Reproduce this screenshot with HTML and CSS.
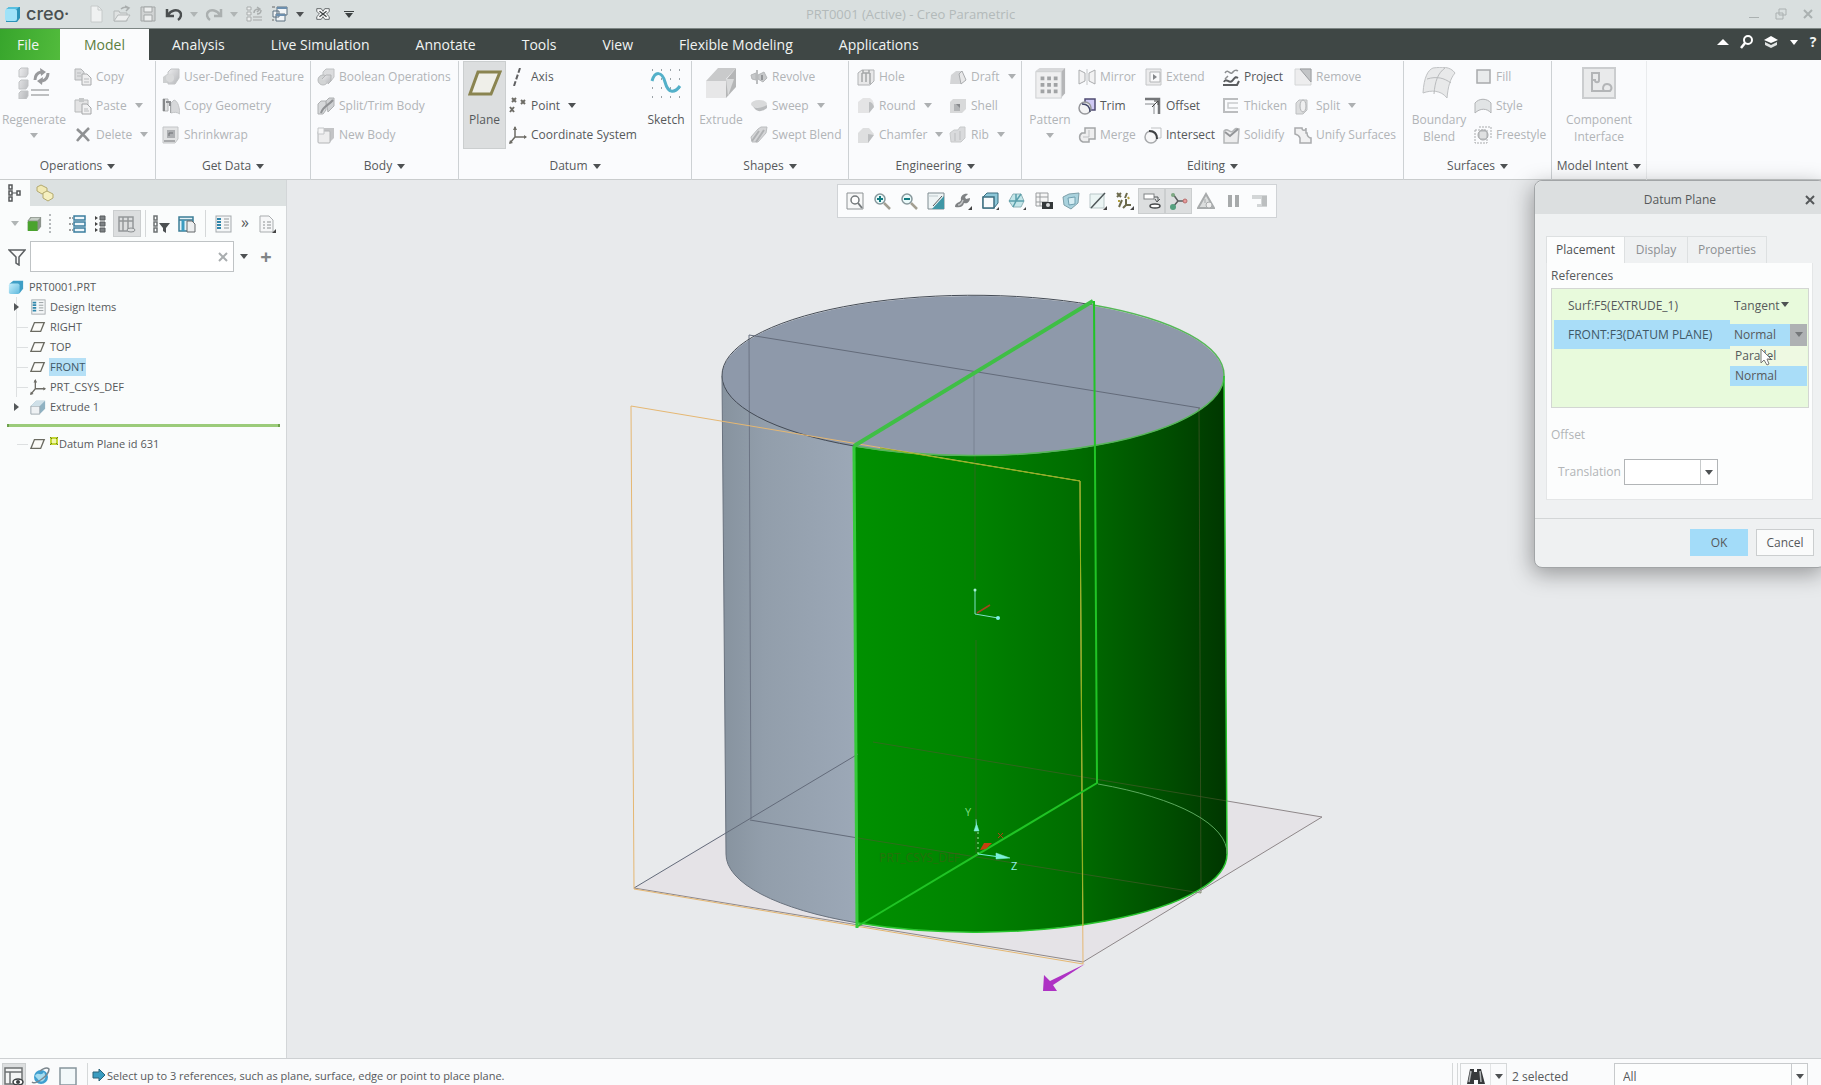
FILE: index.html
```html
<!DOCTYPE html>
<html lang="en">
<head>
<meta charset="utf-8">
<title>PRT0001 (Active) - Creo Parametric</title>
<link rel="stylesheet" href="styles.css">
</head>
<body>
<svg class="sprite" aria-hidden="true">
  <defs>
    <linearGradient id="gCube" x1="0" y1="0" x2="1" y2="1"><stop offset="0" stop-color="#c6effc"/><stop offset="1" stop-color="#5fb9dd"/></linearGradient>
    <linearGradient id="gSolid" x1="0" y1="0" x2="1" y2="1"><stop offset="0" stop-color="#ececee"/><stop offset="1" stop-color="#b4b6b9"/></linearGradient>
  </defs>
  <symbol id="logo" viewBox="0 0 18 18"><path d="M2 5l3-3h11v11l-3 4H2z" fill="#2b93b8"/><rect x="1" y="4" width="12" height="12" rx="2" fill="#9fe2f8"/><path d="M2 4l3-2h10l-2 2z" fill="#58bfe0"/></symbol>
  <symbol id="new" viewBox="0 0 18 18"><path d="M4 1h7l4 4v12H4z" fill="#eff1f1" stroke="#c6caca"/><path d="M11 1v4h4" fill="none" stroke="#c6caca"/></symbol>
  <symbol id="open" viewBox="0 0 18 18"><path d="M1 16V6h5l1 2h7v8z" fill="#dfe2e2" stroke="#b5b9b9"/><path d="M1 16l4-6h12l-4 6z" fill="#eceeee" stroke="#b5b9b9"/><path d="M8 4c2-2 5-2 7-1M12 1l4 2-3 3" fill="none" stroke="#a9adad" stroke-width="1.5"/></symbol>
  <symbol id="save" viewBox="0 0 18 18"><path d="M2 2h14v14H2z" fill="#d0d3d3" stroke="#a3a7a7"/><path d="M5 2h8v5H5zM5 10h8v6H5z" fill="#edefef" stroke="#a3a7a7"/></symbol>
  <symbol id="undo" viewBox="0 0 18 18"><path d="M2 4v7h7" fill="none" stroke="#4b4f50" stroke-width="2.5"/><path d="M3 10c3-5 9-6 12-3 2 2 1 6-2 8" fill="none" stroke="#4b4f50" stroke-width="2.5"/></symbol>
  <symbol id="redo" viewBox="0 0 18 18"><path d="M16 4v7H9" fill="none" stroke="#abb0b0" stroke-width="2.5"/><path d="M15 10C12 5 6 4 3 7c-2 2-1 6 2 8" fill="none" stroke="#abb0b0" stroke-width="2.5"/></symbol>
  <symbol id="regen-s" viewBox="0 0 18 18"><path d="M2 2h4v3H2zM2 7h4v3H2zM2 12h4v4H2z" fill="#eceeee" stroke="#a9adad"/><path d="M8 12h9M8 15h9" stroke="#b7bbbb" stroke-width="1.5"/><path d="M9 8c0-3 2-4 5-4M12 2l3 2-3 3M16 5c0 3-1 4-4 4" fill="none" stroke="#a9adad" stroke-width="1.5"/></symbol>
  <symbol id="windows" viewBox="0 0 18 18"><path d="M6 2h10v8H6zM2 6h6v6H2zM5 9h9v7H5z" fill="#f2f5f7" stroke="#5d7080"/><path d="M6 3h10M5 10h9" stroke="#6c8fae" stroke-width="2"/><path d="M1 2h3M1 15h2" stroke="#666"/></symbol>
  <symbol id="closewin" viewBox="0 0 18 18"><path d="M2 3h5l2 3 2-3h5v3l-3 3 3 3v3h-5l-2-3-2 3H2v-3l3-3-3-3z" fill="#fafbfb" stroke="#565b5c"/><path d="M5 6l8 6M13 6l-8 6" stroke="#3f4445" stroke-width="1.5"/></symbol>
  <symbol id="search" viewBox="0 0 14 14"><circle cx="8" cy="5" r="4" fill="none" stroke="#fff" stroke-width="2"/><path d="M5 8l-4 5" stroke="#fff" stroke-width="2.5"/></symbol>
  <symbol id="learn" viewBox="0 0 14 14"><path d="M7 1l7 4-7 3-7-3z" fill="#fff"/><path d="M1 7l6 3 6-3v3l-6 3-6-3z" fill="#dfe3e2"/></symbol>
  <symbol id="regen" viewBox="0 0 32 32"><path d="M1 3l2-2h7v6l-2 3H1zM1 15l2-2h7v6l-2 3H1zM1 26l2-2h7v5l-2 3H1z" fill="url(#gSolid)" stroke="#c1c3c5"/><path d="M13 23h18M13 28h18" stroke="#bdbfc1" stroke-width="2"/><path d="M17 13c0-5 2-7 6-8M30 6c0 5-2 7-6 8" fill="none" stroke="#98999c" stroke-width="3"/><path d="M22 1l6 4-5 4zM25 10l-6 4 5 4z" fill="#98999c"/></symbol>
  <symbol id="copy" viewBox="0 0 18 18"><path d="M1 1h6l3 3v8H1z" fill="#dcdddf" stroke="#b3b5b7"/><path d="M8 6h5l4 4v7H8z" fill="#eeeeef" stroke="#a8aaac"/><path d="M10 11h5M10 14h5M3 5h4M3 8h4" stroke="#b9bbbd"/></symbol>
  <symbol id="paste" viewBox="0 0 18 18"><path d="M1 3h13v12H1z" fill="#e3e3e4" stroke="#b7b9ba"/><path d="M5 1h5v4H5z" fill="#c6c8c9"/><path d="M8 7h5l4 4v6H8z" fill="#f1f1f2" stroke="#a4a6a8"/><path d="M10 12h4M10 14h5" stroke="#b9bbbd"/></symbol>
  <symbol id="delete" viewBox="0 0 18 18"><path d="M3 3c4 4 8 7 12 12M15 2C11 6 7 10 3 15" fill="none" stroke="#8f9193" stroke-width="2.5"/></symbol>
  <symbol id="udf" viewBox="0 0 18 18"><path d="M1 9l4-3h4l-1 9H1z" fill="#cdcfd0"/><path d="M6 4l3-3h8v9l-4 6H6z" fill="url(#gSolid)" stroke="#c2c4c6"/><circle cx="8" cy="10" r="4" fill="#d9dadb"/></symbol>
  <symbol id="copygeo" viewBox="0 0 18 18"><path d="M1 2h5v12H1z" fill="#e2e3e4" stroke="#b0b2b4"/><path d="M2 2v12M9 5v11" stroke="#86888a" stroke-width="2"/><path d="M9 6l3-3c3 1 5 4 6 14-3-2-6-2-9-1z" fill="#d7d8da" stroke="#c2c4c6"/><path d="M4 5h4v4" fill="none" stroke="#8b8d90" stroke-width="2"/></symbol>
  <symbol id="shrink" viewBox="0 0 18 18"><path d="M1 1h15v12l-3 4H1z" fill="#e2e3e4" stroke="#c3c5c7"/><rect x="5" y="4" width="8" height="8" fill="#adafb2"/><path d="M7 10V7h4M2 15h11" stroke="#6f7174" fill="none"/></symbol>
  <symbol id="bool" viewBox="0 0 18 18"><path d="M6 4l3-3h8v8l-3 4H6z" fill="#dbdcde" stroke="#c0c2c4"/><circle cx="6" cy="12" r="5" fill="#d2d4d5" stroke="#b9bbbd"/><path d="M5 11l4-4h5v6l-3 3" fill="url(#gSolid)" stroke="#b3b5b7"/></symbol>
  <symbol id="splitbody" viewBox="0 0 18 18"><path d="M1 7l3-3h5v9l-3 4H1z" fill="#d6d8da" stroke="#aeb0b2"/><path d="M9 4l3-3h5v8l-6 6z" fill="#cfd1d3" stroke="#aeb0b2"/><path d="M4 16C6 9 11 9 16 3" fill="none" stroke="#8f9194" stroke-width="2"/></symbol>
  <symbol id="newbody" viewBox="0 0 18 18"><path d="M2 5l3-3h12v10l-4 4H2z" fill="#c3c4c6"/><rect x="1" y="5" width="12" height="12" rx="1" fill="#ededee" stroke="#b2b4b6"/><path d="M1 2h6v6H1z" fill="#f6f6f7" stroke="#c4c6c8"/></symbol>
  <symbol id="plane-l" viewBox="0 0 34 32"><path d="M10 5h22l-9 22H2z" fill="#efefe9" stroke="#8a8450" stroke-width="3"/></symbol>
  <symbol id="axis" viewBox="0 0 18 18"><path d="M11 0L5 18" stroke="#5f6062" stroke-width="2" stroke-dasharray="5 2"/></symbol>
  <symbol id="point" viewBox="0 0 18 18"><path d="M3 1l4 4M7 1L3 5M12 3l4 4M16 3l-4 4M1 10l4 5M5 10l-4 5" stroke="#6d6c66" stroke-width="2"/></symbol>
  <symbol id="csys" viewBox="0 0 18 18"><path d="M6 1v10h11M6 11l-5 6" fill="none" stroke="#6d6c66" stroke-width="1.5"/><path d="M6 0l2 4H4zM18 11l-3-2v4zM0 18l1-4 3 3z" fill="#6d6c66"/></symbol>
  <symbol id="sketch" viewBox="0 0 32 32"><path d="M2 3h29M2 12h29M2 21h29M2 30h29" stroke="#9ba3a8" stroke-width="2" stroke-dasharray="1 8"/><path d="M2 14C5 4 12 4 15 15s9 12 15 4" fill="none" stroke="#53b0c9" stroke-width="3"/></symbol>
  <symbol id="extrude" viewBox="0 0 32 32"><path d="M1 14L13 1h18L21 12V31H1z" fill="#c9cacb"/><path d="M1 14h20v17H1z" fill="#e7e7e8"/><path d="M21 13L31 1v19L21 31z" fill="#b5b6b7"/><path d="M21 12h8l-6 17" fill="#d9dadb"/></symbol>
  <symbol id="revolve" viewBox="0 0 18 18"><path d="M7 2v14" stroke="#a6a8aa" stroke-width="1.5"/><path d="M1 7l5-2v7l-4-1zM8 7l6-3 3 6-4 4-5-3z" fill="#c6c8ca" stroke="#b5b7b9"/><path d="M12 7v5" stroke="#939598" stroke-width="2"/></symbol>
  <symbol id="sweep" viewBox="0 0 18 18"><ellipse cx="9" cy="7" rx="8" ry="4" fill="#d9dadb"/><path d="M1 7c3 5 9 5 16 1v3c-5 4-9 4-12 1z" fill="#b9bbbd"/></symbol>
  <symbol id="swept" viewBox="0 0 18 18"><path d="M1 11L8 3l3-2h6l-1 6-8 9H2z" fill="#d4d5d7" stroke="#bbbdbf"/><path d="M2 15L9 5M6 16l8-12" stroke="#b0b2b4" stroke-width="2"/></symbol>
  <symbol id="hole" viewBox="0 0 18 18"><path d="M1 5l4-3h12v11l-4 4H1z" fill="#e8e8e9" stroke="#b1b3b5"/><path d="M5 5v9M9 5v9M6 2v3h6V2M13 5v11" stroke="#a4a6a8" fill="none" stroke-width="1.5"/></symbol>
  <symbol id="round" viewBox="0 0 18 18"><path d="M1 5l5-4h7c4 3 4 6 4 9l-5 6H1z" fill="#e4e4e5"/><path d="M12 5c3 0 4 2 5 5l-5 6z" fill="#bcbec0"/></symbol>
  <symbol id="chamfer" viewBox="0 0 18 18"><path d="M1 7l5-5h6l5 6-6 9H1z" fill="#dedfe0"/><path d="M11 8l6 1-6 8z" fill="#bcbec0"/></symbol>
  <symbol id="draft" viewBox="0 0 18 18"><path d="M2 7l5-4h6l3 9-4 4H1z" fill="#d4d5d7"/><path d="M10 6l3-3 4 9-5 4z" fill="#e8e8e9" stroke="#aaacaf"/></symbol>
  <symbol id="shell" viewBox="0 0 18 18"><path d="M1 5l3-3h13v10l-4 4H1z" fill="#d8d9da"/><path d="M5 7h6v7H5z" fill="#b2b4b6"/><path d="M7 7h4v4z" fill="#86888b"/></symbol>
  <symbol id="rib" viewBox="0 0 18 18"><path d="M1 7l4-3h4l2-3h5v11l-4 4H2z" fill="#d9dadc" stroke="#c8cacb"/><path d="M6 7v8M11 5v9" stroke="#bbbdbf"/></symbol>
  <symbol id="pattern" viewBox="0 0 34 34"><path d="M2 4l4-3h27v27l-4 5H2z" fill="#d7d8da"/><path d="M29 5l4-4v27l-4 4z" fill="#b5b6b8"/><rect x="2" y="5" width="27" height="28" fill="#efeff0" stroke="#cdcfd0"/><path d="M7 12h19M7 19h19M7 26h19" stroke="#a1a3a5" stroke-width="4" stroke-dasharray="4 3"/></symbol>
  <symbol id="mirror" viewBox="0 0 18 18"><path d="M1 2l6 3v8l-6 3zM17 2l-6 3v8l6 3z" fill="#f2f2f3" stroke="#aaacae"/><path d="M9 1v16" stroke="#c6c8ca"/></symbol>
  <symbol id="trim" viewBox="0 0 18 18"><path d="M7 2h10v11H12L7 7z" fill="#cfc9f4" stroke="#4f4b72" stroke-width="1.5"/><circle cx="7" cy="11" r="6" fill="#f3f3f4" stroke="#96979b" stroke-width="1.5"/><path d="M4 7c5 0 8 3 8 8" fill="none" stroke="#44486a" stroke-width="1.5"/></symbol>
  <symbol id="merge" viewBox="0 0 18 18"><path d="M7 2h10v11h-6v3H5a5 5 0 0 1-1-9h3z" fill="#eeeeef" stroke="#a4a6a8" stroke-width="1.5"/><path d="M5 11h6V4" fill="none" stroke="#bfc1c3"/></symbol>
  <symbol id="extend" viewBox="0 0 18 18"><path d="M2 1h15v16H2z" fill="#ebebec" stroke="#c4c6c8"/><path d="M6 4h10v10H6z" fill="#f9f9fa" stroke="#b3b5b7"/><path d="M9 6l4 3-4 3z" fill="#85878a"/></symbol>
  <symbol id="offset" viewBox="0 0 18 18"><path d="M1 2h14v15" fill="none" stroke="#747679" stroke-width="2.5"/><path d="M1 7h9v10" fill="none" stroke="#adb0b2" stroke-width="1.5"/><path d="M8 10l6-6M10 4h4v4" fill="none" stroke="#444"/></symbol>
  <symbol id="intersect" viewBox="0 0 18 18"><path d="M7 2h10v10h-5" fill="none" stroke="#bfc1c3"/><circle cx="7" cy="11" r="6" fill="#f7f7f8" stroke="#a7a9ac" stroke-width="1.5"/><path d="M5 5c5 0 8 3 8 8" fill="none" stroke="#3f4143" stroke-width="2"/></symbol>
  <symbol id="project" viewBox="0 0 18 18"><path d="M3 5c3-5 5 2 7 0s3-4 6-2M6 8l-3 3" fill="none" stroke="#8d8f92" stroke-width="1.5"/><path d="M2 14c2-5 5 2 8-1s3-5 6-3M1 17h14l2-4" fill="none" stroke="#5b5d60" stroke-width="2"/></symbol>
  <symbol id="thicken" viewBox="0 0 18 18"><path d="M16 2H2v13h14" fill="none" stroke="#bbbdbf" stroke-width="2"/><path d="M16 6H6v5h10" fill="none" stroke="#c9cbcd" stroke-width="1.5"/></symbol>
  <symbol id="solidify" viewBox="0 0 18 18"><path d="M2 5c4-4 6 3 9 0s3-3 6-2l-1 14H2z" fill="#ececed" stroke="#b4b6b8" stroke-width="1.5"/><path d="M3 6l5 4 8-7" fill="none" stroke="#939598" stroke-width="2"/></symbol>
  <symbol id="remove" viewBox="0 0 18 18"><path d="M1 1h16v16H1z" fill="#ededee" stroke="#d4d6d7"/><path d="M6 1h11v13z" fill="#c3c5c7" stroke="#9c9ea1"/></symbol>
  <symbol id="split" viewBox="0 0 18 18"><path d="M2 6l3-3h8v10l-4 4H2z" fill="#dcddde" stroke="#bdbfc1"/><ellipse cx="9" cy="9" rx="3" ry="6" fill="#efeff0" stroke="#b1b3b5"/></symbol>
  <symbol id="unify" viewBox="0 0 18 18"><path d="M1 2h7c0 3 4 3 4 0v5h1c0 4 3 5 4 5v5H6v-5C5 9 1 8 1 8z" fill="#f1f1f2" stroke="#a9abad" stroke-width="1.5"/></symbol>
  <symbol id="boundary" viewBox="0 0 34 32"><path d="M1 26C2 10 6 3 11 1c9-1 17-2 22 5-5 6-7 14-8 25-6-8-16-8-24-5z" fill="#e8e9ea" stroke="#c0c2c4"/><path d="M12 27C13 14 16 6 23 1M5 12c10-3 17-1 24 4" fill="none" stroke="#b9bbbd"/></symbol>
  <symbol id="fill" viewBox="0 0 18 18"><rect x="3" y="2" width="13" height="13" fill="#e9ebec" stroke="#a8aaac" stroke-width="1.5"/></symbol>
  <symbol id="style" viewBox="0 0 18 18"><path d="M1 15V6c4-5 12-5 16 0v10c-4-5-11-5-16 0z" fill="#e1e4e5" stroke="#b1b3b5"/></symbol>
  <symbol id="freestyle" viewBox="0 0 18 18"><path d="M1 4h12v13H1zM5 1h12v12" fill="none" stroke="#a9abad" stroke-dasharray="2 1"/><circle cx="9" cy="9" r="5" fill="#c6c8ca" stroke="#a3a5a7"/><path d="M6 6h6v6H6z" fill="#dfe0e1"/></symbol>
  <symbol id="component" viewBox="0 0 34 32"><rect x="1" y="1" width="32" height="30" fill="#e9eaeb" stroke="#cbcdcf" stroke-width="2"/><path d="M10 12V6h7v7c0 3-4 3-4 0h-3v11h12c-2-2-1-7 3-7s6 4 3 7h-6" fill="none" stroke="#b3b5b7" stroke-width="2"/></symbol>
  <symbol id="tree" viewBox="0 0 16 18"><path d="M2 1h3v4H2zM2 7h3v4H2zM2 13h3v4H2zM10 7h3v4h-3z" fill="none" stroke="#55585a" stroke-width="1.5"/><path d="M5 9h5" stroke="#55585a"/></symbol>
  <symbol id="folders" viewBox="0 0 18 18"><path d="M1 3l4-2 6 3v4l-5 2-5-3z" fill="#f1e9b4" stroke="#b3a96f"/><path d="M7 9l4-2 6 3v4l-5 3-5-3z" fill="#f6f0c0" stroke="#b3a96f"/></symbol>
  <symbol id="greencube" viewBox="0 0 18 18"><path d="M2 5l3-4h12v11l-4 5H2z" fill="#8c948c"/><rect x="2" y="6" width="11" height="11" rx="1" fill="#4aa32e"/><path d="M3 5l3-3h10l-3 3z" fill="#c6cec6"/></symbol>
  <symbol id="list1" viewBox="0 0 18 18"><path d="M1 3h4M1 9h4M1 15h4" stroke="#444" stroke-dasharray="2 1"/><path d="M6 1h11v4H6zM6 7h11v4H6zM6 13h11v4H6z" fill="#eef6fa" stroke="#3b7e9e" stroke-width="1.5"/></symbol>
  <symbol id="list2" viewBox="0 0 18 18"><path d="M3 1l3 2-3 2zM3 7l3 2-3 2zM3 13l3 2-3 2z" fill="#444"/><path d="M8 1h5v4H8zM8 7h5v4H8zM8 13h5v4H8z" fill="#7d8184" stroke="#585c5f"/></symbol>
  <symbol id="treecols" viewBox="0 0 18 18"><path d="M1 2h14v14H1zM1 6h14M5 2v14M10 2v14" fill="none" stroke="#94989a" stroke-width="1.5"/><ellipse cx="13" cy="15" rx="4" ry="2" fill="#dcdedf" stroke="#8b8f91"/></symbol>
  <symbol id="treefilter" viewBox="0 0 18 18"><path d="M2 1h3v4H2zM2 7h3v4H2zM2 13h3v4H2z" fill="none" stroke="#6d7173" stroke-width="1.5"/><path d="M7 8h11l-4 5v5l-3-2v-3z" fill="#4c5052"/></symbol>
  <symbol id="colpage" viewBox="0 0 18 18"><path d="M1 2h14v14H1zM1 5h14" fill="#e4f2f7" stroke="#3c7d96" stroke-width="1.5"/><path d="M5 5v11" stroke="#3c9cc0" stroke-width="3"/><path d="M9 6h5l3 3v8H9z" fill="#eceeef" stroke="#64686a"/></symbol>
  <symbol id="design" viewBox="0 0 18 18"><rect x="2" y="1" width="15" height="16" fill="#f4f6f7" stroke="#a5aaad"/><path d="M3 4h4M3 7h4M3 10h4M3 13h4" stroke="#2f86ab" stroke-width="2"/><path d="M10 4h5M10 7h5M10 10h5M10 13h5" stroke="#93999c"/></symbol>
  <symbol id="doc" viewBox="0 0 18 18"><path d="M2 1h9l4 4v12H2z" fill="#f6f7f8" stroke="#a9adaf"/><path d="M5 7h2M5 10h2M5 13h2M9 7h4M9 10h4M9 13h4" stroke="#8d9193"/><path d="M18 14v4h-4z" fill="#444"/></symbol>
  <symbol id="funnel" viewBox="0 0 18 18"><path d="M1 2h16l-6 7v8l-3-2V9z" fill="#fafbfb" stroke="#5b5f61" stroke-width="1.5"/></symbol>
  <symbol id="part" viewBox="0 0 18 18"><path d="M2 5l4-3h11v9l-4 5H2z" fill="#3f9fc6"/><rect x="1" y="5" width="12" height="12" rx="2" fill="url(#gCube)"/></symbol>
  <symbol id="plane" viewBox="0 0 18 18"><path d="M5 4h11l-4 10H1z" fill="#fbfbf8" stroke="#6b6b62" stroke-width="1.5"/></symbol>
  <symbol id="ext" viewBox="0 0 18 18"><path d="M1 8l6-6h10v9l-5 5H1z" fill="#8fb2c2"/><path d="M1 8h10v9H1z" fill="#eef1f3" stroke="#9ba6ad"/><path d="M1 8l6-6h10l-6 6z" fill="#cfe0e8"/></symbol>
  <symbol id="flag" viewBox="0 0 8 8"><path d="M0 0h8v8H0z" fill="#c3d833"/><path d="M2 2h4v4H2z" fill="#f0f6b0"/><path d="M0 0l2 2M8 0L6 2M0 8l2-2M8 8L6 6" stroke="#6e7d1f"/></symbol>
  <symbol id="refit" viewBox="0 0 18 18"><path d="M1 1h16v16H1z" fill="#f7f8f8" stroke="#8d9294"/><circle cx="9" cy="8" r="4" fill="#fff" stroke="#74797b" stroke-width="1.5"/><path d="M12 11l4 5" stroke="#74797b" stroke-width="2"/></symbol>
  <symbol id="zoomin" viewBox="0 0 18 18"><circle cx="7" cy="7" r="5" fill="#eafafa" stroke="#87989c" stroke-width="1.5"/><path d="M4 7h6M7 4v6" stroke="#117a80" stroke-width="2"/><path d="M11 11l6 6" stroke="#a39f92" stroke-width="2.5"/></symbol>
  <symbol id="zoomout" viewBox="0 0 18 18"><circle cx="7" cy="7" r="5" fill="#eafafa" stroke="#87989c" stroke-width="1.5"/><path d="M4 7h6" stroke="#117a80" stroke-width="2"/><path d="M11 11l6 6" stroke="#a39f92" stroke-width="2.5"/></symbol>
  <symbol id="repaint" viewBox="0 0 18 18"><path d="M1 1h16v16H1z" fill="#eef4f5" stroke="#7f8c91"/><path d="M5 17L17 4v13z" fill="#3f97a6"/><path d="M1 4h10" stroke="#bfcacd"/><path d="M15 4L6 14" stroke="#52585a"/></symbol>
  <symbol id="render" viewBox="0 0 18 18"><path d="M1 15c0-5 5-4 6-7-1-4 3-7 7-6l-3 3 1 2 4-1c0 4-3 6-6 5-1 4-4 5-9 4z" fill="#7f8284"/><path d="M4 13c3 0 4-2 5-5" fill="none" stroke="#c3c5c6" stroke-width="1.5"/><path d="M18 14v4h-4z" fill="#444"/></symbol>
  <symbol id="display" viewBox="0 0 18 18"><path d="M2 5l4-4h11v10l-4 5H2z" fill="#8cc7d8" stroke="#3b6f80"/><path d="M2 5h11v11H2z" fill="#f8fbfc" stroke="#3b6f80" stroke-width="1.5"/><path d="M18 15v3h-3z" fill="#444"/></symbol>
  <symbol id="orient" viewBox="0 0 18 18"><path d="M5 2h8l3 7-3 6H5L1 9z" fill="#c3e6e9" stroke="#8fb3b8"/><path d="M8 2v7l-3 6M1 9h15M13 2L8 9" fill="none" stroke="#5a9fab" stroke-width="1.5"/><path d="M18 15v3h-3z" fill="#444"/></symbol>
  <symbol id="views" viewBox="0 0 18 18"><path d="M1 1h12v13H1zM1 5h12M1 10h12M5 1v13" fill="#f6f6f6" stroke="#9a9d9f"/><rect x="7" y="10" width="11" height="7" fill="#34383a"/><circle cx="13" cy="13" r="2" fill="#d8dadb"/></symbol>
  <symbol id="persp" viewBox="0 0 18 18"><path d="M1 5l6-3 10-1-1 10-7 6-7-4z" fill="#a9d2dd" stroke="#7d9fa9"/><path d="M6 6l7-1v7l-6 1z" fill="#d6edf3" stroke="#70a0b0"/></symbol>
  <symbol id="section" viewBox="0 0 18 18"><path d="M1 2h14v14H1z" fill="#ebf5f4" stroke="#b9c7c8"/><path d="M16 1L2 16" stroke="#4e5658" stroke-width="1.5"/><path d="M18 14v4h-4z" fill="#444"/></symbol>
  <symbol id="datums" viewBox="0 0 18 18"><path d="M1 1l4 4M5 1L1 5M11 1L9 6M6 8L3 15M10 7v6h5M10 13l-3 3" fill="none" stroke="#6c6a4c" stroke-width="2"/><path d="M12 5l1 2M3 8v2" stroke="#b3a13f" stroke-width="2"/><path d="M18 14v4h-4z" fill="#444"/></symbol>
  <symbol id="annot" viewBox="0 0 18 18"><rect x="1" y="2" width="10" height="5" fill="#fff" stroke="#808386"/><path d="M11 5h4v4M17 7l-3 3-2-3" fill="none" stroke="#55585a"/><ellipse cx="12" cy="14" rx="5" ry="2" fill="#fff" stroke="#45484a" stroke-width="1.5"/></symbol>
  <symbol id="spin" viewBox="0 0 18 18"><path d="M3 2l5 7-5 6M8 9h8" fill="none" stroke="#5a5d5f" stroke-width="1.5"/><circle cx="3" cy="3" r="2" fill="#7ea883"/><circle cx="3" cy="15" r="3" fill="#54a07f"/><circle cx="15" cy="9" r="2" fill="#e59a9a" stroke="#b86f6f"/></symbol>
  <symbol id="warn" viewBox="0 0 18 18"><path d="M9 2l8 14H1z" fill="#dcdede" stroke="#a8abac" stroke-width="2"/><circle cx="12" cy="13" r="3" fill="#eee" stroke="#a8abac"/><path d="M8 7v4" stroke="#a8abac"/></symbol>
  <symbol id="pause" viewBox="0 0 18 18"><path d="M4 3h4v12H4zM11 3h4v12h-4z" fill="#a7aaab"/></symbol>
  <symbol id="play" viewBox="0 0 18 18"><path d="M1 3h15v12H6v-3h4V7H1z" fill="#d3d6d7"/><path d="M11 4h5v10h-5z" fill="#bcbfc0"/></symbol>
  <symbol id="layout" viewBox="0 0 20 20"><path d="M1 2h17v16H1zM1 6h17M6 6v12" fill="#f4f5f5" stroke="#6d7173" stroke-width="1.5"/><ellipse cx="14" cy="16" rx="5" ry="3" fill="#fff" stroke="#3b3f41" stroke-width="1.5"/><circle cx="14" cy="16" r="2" fill="#3b3f41"/></symbol>
  <symbol id="globe" viewBox="0 0 20 20"><circle cx="10" cy="11" r="7" fill="#3f9fd0"/><path d="M4 10c3-5 6 1 9-4 2 4 2 7-1 9s-5-2-8-5z" fill="#a4dcf0"/><path d="M1 16c3 3 17-6 17-13-3-3-9 2-9 2" fill="none" stroke="#7b868d" stroke-width="1.5"/></symbol>
  <symbol id="blank" viewBox="0 0 20 20"><rect x="2" y="2" width="16" height="17" fill="#f2f8fa" stroke="#87959c" stroke-width="1.5"/></symbol>
  <symbol id="arrow" viewBox="0 0 14 14"><path d="M1 4h6V1l6 6-6 6v-3H1z" fill="#3a9cc0" stroke="#2a6379"/></symbol>
  <symbol id="bino" viewBox="0 0 20 20"><path d="M4 3h4v3h3V3h4l4 15h-7v-4H8v4H1z" fill="#37393b"/><path d="M5 5l-2 11M14 5l1 11" stroke="#b0b4b6" stroke-width="1.5"/></symbol>
  <symbol id="cross" viewBox="0 0 12 12"><path d="M2 2l8 8M10 2l-8 8" stroke="currentColor" stroke-width="2"/></symbol>
  <symbol id="restore" viewBox="0 0 12 12"><path d="M4 1h7v6H4zM1 5h7v6H1z" fill="none" stroke="#abb1b1"/></symbol>
</svg>

<div class="app">
  <header class="titlebar">
    <div class="quick">
      <svg class="i18"><use href="#logo"/></svg><span class="brand">creo<sup>•</sup></span>
      <button aria-label="New"><svg class="i18"><use href="#new"/></svg></button>
      <button aria-label="Open"><svg class="i18"><use href="#open"/></svg></button>
      <button aria-label="Save"><svg class="i18"><use href="#save"/></svg></button>
      <button aria-label="Undo"><svg class="i18"><use href="#undo"/></svg></button>
      <button class="drop" aria-label="Undo list"><i class="caret pale"></i></button>
      <button aria-label="Redo"><svg class="i18"><use href="#redo"/></svg></button>
      <button class="drop" aria-label="Redo list"><i class="caret pale"></i></button>
      <button aria-label="Regenerate"><svg class="i18"><use href="#regen-s"/></svg></button>
      <button aria-label="Windows"><svg class="i18"><use href="#windows"/></svg></button>
      <button class="drop" aria-label="Window list"><i class="caret"></i></button>
      <button class="shut" aria-label="Close window"><svg class="i16"><use href="#closewin"/></svg></button>
      <button class="drop more" aria-label="Customize"><i class="caret"></i></button>
    </div>
    <h1>PRT0001 (Active) - Creo Parametric</h1>
    <div class="wincontrols">
      <button aria-label="Minimize"><i class="dash"></i></button>
      <button aria-label="Restore"><svg class="i12"><use href="#restore"/></svg></button>
      <button aria-label="Close"><svg class="i12"><use href="#cross"/></svg></button>
    </div>
  </header>

  <nav class="tabs">
    <button class="file">File</button>
    <button class="current">Model</button>
    <button>Analysis</button>
    <button>Live Simulation</button>
    <button>Annotate</button>
    <button>Tools</button>
    <button>View</button>
    <button>Flexible Modeling</button>
    <button>Applications</button>
    <div class="helpers">
      <button aria-label="Minimize the ribbon"><i class="chevron"></i></button>
      <button aria-label="Search"><svg class="i14"><use href="#search"/></svg></button>
      <button aria-label="Learning"><svg class="i14"><use href="#learn"/></svg></button>
      <button class="narrow" aria-label="Learning list"><i class="caret"></i></button>
      <button class="help" aria-label="Help">?</button>
    </div>
  </nav>

  <div class="ribbon">
    <section class="group">
      <div class="cmds operations">
        <button class="big" disabled><svg><use href="#regen"/></svg><span>Regenerate</span><i class="caret"></i></button>
        <div class="col">
          <button disabled><svg><use href="#copy"/></svg>Copy</button>
          <button disabled><svg><use href="#paste"/></svg>Paste<i class="caret"></i></button>
          <button disabled><svg><use href="#delete"/></svg>Delete<i class="caret"></i></button>
        </div>
      </div>
      <button class="title">Operations<i class="caret"></i></button>
    </section>
    <section class="group">
      <div class="cmds single">
        <div class="col">
          <button disabled><svg><use href="#udf"/></svg>User-Defined Feature</button>
          <button disabled><svg><use href="#copygeo"/></svg>Copy Geometry</button>
          <button disabled><svg><use href="#shrink"/></svg>Shrinkwrap</button>
        </div>
      </div>
      <button class="title">Get Data<i class="caret"></i></button>
    </section>
    <section class="group">
      <div class="cmds single">
        <div class="col">
          <button disabled><svg><use href="#bool"/></svg>Boolean Operations</button>
          <button disabled><svg><use href="#splitbody"/></svg>Split/Trim Body</button>
          <button disabled><svg><use href="#newbody"/></svg>New Body</button>
        </div>
      </div>
      <button class="title">Body<i class="caret"></i></button>
    </section>
    <section class="group">
      <div class="cmds datum">
        <button class="big pressed"><svg><use href="#plane-l"/></svg><span>Plane</span></button>
        <div class="col">
          <button><svg><use href="#axis"/></svg>Axis</button>
          <button><svg><use href="#point"/></svg>Point<i class="caret"></i></button>
          <button><svg><use href="#csys"/></svg>Coordinate System</button>
        </div>
        <button class="big"><svg><use href="#sketch"/></svg><span>Sketch</span></button>
      </div>
      <button class="title">Datum<i class="caret"></i></button>
    </section>
    <section class="group">
      <div class="cmds shapes">
        <button class="big" disabled><svg><use href="#extrude"/></svg><span>Extrude</span></button>
        <div class="col">
          <button disabled><svg><use href="#revolve"/></svg>Revolve</button>
          <button disabled><svg><use href="#sweep"/></svg>Sweep<i class="caret"></i></button>
          <button disabled><svg><use href="#swept"/></svg>Swept Blend</button>
        </div>
      </div>
      <button class="title">Shapes<i class="caret"></i></button>
    </section>
    <section class="group">
      <div class="cmds engineering">
        <div class="col">
          <button disabled><svg><use href="#hole"/></svg>Hole</button>
          <button disabled><svg><use href="#round"/></svg>Round<i class="caret"></i></button>
          <button disabled><svg><use href="#chamfer"/></svg>Chamfer<i class="caret"></i></button>
        </div>
        <div class="col">
          <button disabled><svg><use href="#draft"/></svg>Draft<i class="caret"></i></button>
          <button disabled><svg><use href="#shell"/></svg>Shell</button>
          <button disabled><svg><use href="#rib"/></svg>Rib<i class="caret"></i></button>
        </div>
      </div>
      <button class="title">Engineering<i class="caret"></i></button>
    </section>
    <section class="group">
      <div class="cmds editing">
        <button class="big" disabled><svg><use href="#pattern"/></svg><span>Pattern</span><i class="caret"></i></button>
        <div class="col">
          <button disabled><svg><use href="#mirror"/></svg>Mirror</button>
          <button><svg><use href="#trim"/></svg>Trim</button>
          <button disabled><svg><use href="#merge"/></svg>Merge</button>
        </div>
        <div class="col">
          <button disabled><svg><use href="#extend"/></svg>Extend</button>
          <button><svg><use href="#offset"/></svg>Offset</button>
          <button><svg><use href="#intersect"/></svg>Intersect</button>
        </div>
        <div class="col">
          <button><svg><use href="#project"/></svg>Project</button>
          <button disabled><svg><use href="#thicken"/></svg>Thicken</button>
          <button disabled><svg><use href="#solidify"/></svg>Solidify</button>
        </div>
        <div class="col">
          <button disabled><svg><use href="#remove"/></svg>Remove</button>
          <button disabled><svg><use href="#split"/></svg>Split<i class="caret"></i></button>
          <button disabled><svg><use href="#unify"/></svg>Unify Surfaces</button>
        </div>
      </div>
      <button class="title">Editing<i class="caret"></i></button>
    </section>
    <section class="group">
      <div class="cmds surfaces">
        <button class="big" disabled><svg><use href="#boundary"/></svg><span>Boundary<br>Blend</span></button>
        <div class="col">
          <button disabled><svg><use href="#fill"/></svg>Fill</button>
          <button disabled><svg><use href="#style"/></svg>Style</button>
          <button disabled><svg><use href="#freestyle"/></svg>Freestyle</button>
        </div>
      </div>
      <button class="title">Surfaces<i class="caret"></i></button>
    </section>
    <section class="group faint">
      <div class="cmds intent">
        <button class="big" disabled><svg><use href="#component"/></svg><span>Component<br>Interface</span></button>
      </div>
      <button class="title">Model Intent<i class="caret"></i></button>
    </section>
  </div>

  <main class="work">
    <aside class="navigator">
      <div class="navtabs">
        <button class="on" aria-label="Model tree"><svg class="i18"><use href="#tree"/></svg></button>
        <button aria-label="Folder browser"><svg class="i18"><use href="#folders"/></svg></button>
      </div>
      <div class="treebar">
        <button aria-label="Show"><i class="caret pale"></i></button>
        <button aria-label="Model"><svg class="i16"><use href="#greencube"/></svg></button>
        <i class="dots"></i>
        <button aria-label="Expand"><svg class="i18"><use href="#list1"/></svg></button>
        <button aria-label="Collapse"><svg class="i18"><use href="#list2"/></svg></button>
        <button class="pressed" aria-label="Tree columns"><svg class="i18"><use href="#treecols"/></svg></button>
        <i class="sep"></i>
        <button aria-label="Tree filters"><svg class="i18"><use href="#treefilter"/></svg></button>
        <button aria-label="Column display"><svg class="i18"><use href="#colpage"/></svg></button>
        <i class="sep"></i>
        <button aria-label="Design items"><svg class="i18"><use href="#design"/></svg></button>
        <button class="chev" aria-label="More">»</button>
        <button aria-label="Settings"><svg class="i18"><use href="#doc"/></svg></button>
      </div>
      <div class="filter">
        <svg class="i18"><use href="#funnel"/></svg>
        <div class="field"><input type="text" aria-label="Filter the tree"><button aria-label="Clear"><svg class="i12"><use href="#cross"/></svg></button></div>
        <button aria-label="Filter options"><i class="caret"></i></button>
        <button class="plus" aria-label="Add filter">+</button>
      </div>
      <div class="treewrap">
        <div class="root"><svg class="i16"><use href="#part"/></svg>PRT0001.PRT</div>
        <ul class="tree">
          <li class="parent"><svg class="i16"><use href="#design"/></svg><span>Design Items</span></li>
          <li><svg class="i16"><use href="#plane"/></svg><span>RIGHT</span></li>
          <li><svg class="i16"><use href="#plane"/></svg><span>TOP</span></li>
          <li class="sel"><svg class="i16"><use href="#plane"/></svg><span>FRONT</span></li>
          <li><svg class="i16"><use href="#csys"/></svg><span>PRT_CSYS_DEF</span></li>
          <li class="parent"><svg class="i16"><use href="#ext"/></svg><span>Extrude 1</span></li>
        </ul>
        <div class="insert"></div>
        <ul class="tree">
          <li><svg class="i16"><use href="#plane"/></svg><svg class="i8"><use href="#flag"/></svg><span>Datum Plane id 631</span></li>
        </ul>
      </div>
    </aside>

    <section class="viewport">
      <svg class="model" viewBox="287 180 1534 878">
        <defs>
          <linearGradient id="face" gradientUnits="userSpaceOnUse" x1="857" y1="0" x2="1227" y2="0">
            <stop offset="0" stop-color="#009000"/><stop offset=".3" stop-color="#008400"/><stop offset=".6" stop-color="#006c00"/><stop offset=".85" stop-color="#004c00"/><stop offset="1" stop-color="#003600"/>
          </linearGradient>
          <linearGradient id="steel" gradientUnits="userSpaceOnUse" x1="723" y1="0" x2="857" y2="0">
            <stop offset="0" stop-color="#87939f"/><stop offset=".3" stop-color="#929eab"/><stop offset="1" stop-color="#9ca8b7"/>
          </linearGradient>
        </defs>
        <path d="M634 888L873 742L1322 817L1083 962z" fill="#e5e3e7"/>
        <path d="M722 376L726 854A251 78 0 0 0 858 923L854 446z" fill="url(#steel)"/>
        <path d="M854 446L858 923A251 78 0 0 0 1227 854L1224 376z" fill="url(#face)"/>
        <ellipse cx="973" cy="376" rx="251" ry="80" fill="#8e99aa"/>
        <path d="M749 335L751 819" stroke="#6c7484" fill="none"/>
        <path d="M854 446A251 80 0 0 1 722 376A251 80 0 0 1 1093 305" fill="none" stroke="#444b55"/>
        <path d="M722 376L726 854A251 78 0 0 0 858 923" fill="none" stroke="#69727e"/>
        <path d="M749 335L1200 408M750 820L858 838M634 888L858 754" fill="none" stroke="#636b7a"/>
        <path d="M974 375V456" stroke="#6c7484" opacity=".6"/>
        <path d="M975 456V580M976 640V853M873 742L1227 801M858 838L1201 893M1199 408L1201 893" fill="none" stroke="#4e5a2e" opacity=".6"/>
        <path d="M1227 801L1322 817L1083 962L634 888" fill="none" stroke="#8e8789"/>
        <path d="M1093 305A251 80 0 0 1 1224 376A251 80 0 0 1 854 446" fill="none" stroke="#56b758" stroke-width="1.5"/>
        <path d="M1224 376L1227 854A251 78 0 0 1 858 923" fill="none" stroke="#29c52e" stroke-width="1.5"/>
        <path d="M1098 784A250 79 0 0 1 1227 854" fill="none" stroke="#5ca95e"/>
        <path d="M631 406L1080 481L1083 964L634 889z" fill="none" stroke="#e5b772"/>
        <path d="M880 448L1080 481L1083 926" fill="none" stroke="#8db21c"/>
        <path d="M854 446L1093 301" stroke="#3fbf45" stroke-width="4"/>
        <path d="M1094 301L1097 783L858 926" fill="none" stroke="#20c425" stroke-width="2"/>
        <path d="M854 446L857 928" stroke="#35c93a" stroke-width="3"/>
        <path d="M975 590V614L998 618" fill="none" stroke="#7fe0c8"/>
        <path d="M977 613l13 -8" stroke="#a4451b" stroke-width="1.5"/>
        <circle cx="975" cy="590" r="1.5" fill="#a5f0d8"/><circle cx="998" cy="618" r="2" fill="#7ff0e8"/>
        <path d="M978 854V832" stroke="#9be8a0" stroke-dasharray="2 3"/>
        <path d="M976 819v6l-2 6h5l-2-6M1010 858l-14 -5v6z" fill="#7ff0d8" stroke="#7ff0d8" stroke-width=".5"/>
        <path d="M978 854L1000 857" stroke="#6ff0d8"/>
        <path d="M980 850l4 -7h8l-6 6z" fill="#c8400f"/>
        <path d="M998 833l5 5M1003 833l-5 5" stroke="#b04010"/>
        <text class="axisname" x="965" y="816">Y</text>
        <text class="axisname z" x="1011" y="870">Z</text>
        <text class="csysname" x="879" y="862">PRT_CSYS_DEF</text>
        <path d="M1085 964L1050 981L1044 975L1043 991L1057 991L1053 985z" fill="#ae32c4"/>
      </svg>
      <div class="viewbar" role="toolbar">
        <button aria-label="Refit"><svg class="i18"><use href="#refit"/></svg></button>
        <button aria-label="Zoom in"><svg class="i18"><use href="#zoomin"/></svg></button>
        <button aria-label="Zoom out"><svg class="i18"><use href="#zoomout"/></svg></button>
        <button aria-label="Repaint"><svg class="i18"><use href="#repaint"/></svg></button>
        <button aria-label="Rendering"><svg class="i18"><use href="#render"/></svg></button>
        <button aria-label="Display style"><svg class="i18"><use href="#display"/></svg></button>
        <button aria-label="Orientations"><svg class="i18"><use href="#orient"/></svg></button>
        <button aria-label="View manager"><svg class="i18"><use href="#views"/></svg></button>
        <button aria-label="Perspective"><svg class="i18"><use href="#persp"/></svg></button>
        <button aria-label="Section"><svg class="i18"><use href="#section"/></svg></button>
        <button aria-label="Datum display"><svg class="i18"><use href="#datums"/></svg></button>
        <button class="pressed" aria-label="Annotation display"><svg class="i18"><use href="#annot"/></svg></button>
        <button class="pressed" aria-label="Spin center"><svg class="i18"><use href="#spin"/></svg></button>
        <button aria-label="Simulate"><svg class="i18"><use href="#warn"/></svg></button>
        <button aria-label="Pause"><svg class="i18"><use href="#pause"/></svg></button>
        <button aria-label="Resume"><svg class="i18"><use href="#play"/></svg></button>
      </div>
    </section>

    <form class="dialog" role="dialog" aria-labelledby="dlgtitle">
      <div class="dlghead"><h2 id="dlgtitle">Datum Plane</h2><button type="button" aria-label="Close dialog"><svg class="i12"><use href="#cross"/></svg></button></div>
      <div class="dlgbody">
        <div class="dlgtabs"><button type="button" class="on">Placement</button><button type="button">Display</button><button type="button">Properties</button></div>
        <div class="pane">
          <p>References</p>
          <div class="refs">
            <div class="ref"><span>Surf:F5(EXTRUDE_1)</span>
              <label class="constraint"><select aria-label="Constraint for Surf:F5"><option>Tangent</option></select><i class="caret"></i></label></div>
            <div class="ref active"><span>FRONT:F3(DATUM PLANE)</span>
              <label class="constraint"><select aria-label="Constraint for FRONT:F3"><option>Normal</option></select><i class="arrowbox"><i class="caret"></i></i></label>
              <ul class="options"><li>Parallel</li><li class="on">Normal</li></ul>
              <svg class="pointer" viewBox="0 0 12 18"><path d="M1 1v14l3-3 3 5 2-1-2-5h4z" fill="#fff" stroke="#777"/></svg>
            </div>
          </div>
          <p class="dim">Offset</p>
          <div class="translate"><label for="trans">Translation</label><div class="combo"><input id="trans" type="text"><button type="button" aria-label="Translation values"><i class="caret"></i></button></div></div>
        </div>
      </div>
      <div class="dlgfoot"><button type="button" class="ok">OK</button><button type="button">Cancel</button></div>
    </form>
  </main>

  <footer class="status">
    <button class="pressed" aria-label="Navigator"><svg class="i20"><use href="#layout"/></svg></button>
    <button aria-label="Browser"><svg class="i20"><use href="#globe"/></svg></button>
    <button aria-label="Full screen"><svg class="i20"><use href="#blank"/></svg></button>
    <i class="sep"></i>
    <svg class="i14"><use href="#arrow"/></svg>
    <span class="message">Select up to 3 references, such as plane, surface, edge or point to place plane.</span>
    <i class="sep"></i><i class="sep second"></i>
    <div class="find"><button aria-label="Find"><svg class="i20"><use href="#bino"/></svg></button><button class="narrow" aria-label="Find list"><i class="caret"></i></button></div>
    <span class="count">2 selected</span>
    <label class="scope"><select aria-label="Selection filter"><option>All</option></select><i class="caret"></i></label>
  </footer>
</div>
</body>
</html>
```

FILE: styles.css
```css
* { box-sizing: border-box; }
html, body { height: 100%; }
body {
  margin: 0;
  overflow: hidden;
  font: 12px/18px "Open Sans", "Noto Sans", sans-serif;
  color: #56595b;
}
button, input, select { font: inherit; color: inherit; }
button { display: flex; align-items: center; justify-content: center; padding: 0; border: 0; background: none; white-space: nowrap; }
h1, h2, p, ul { margin: 0; padding: 0; font-weight: 400; }
ul { list-style: none; }
svg { display: block; flex: none; }
.sprite { position: absolute; width: 0; height: 0; }
.i8 { width: 8px; height: 8px; }
.i12 { width: 12px; height: 12px; }
.i14 { width: 14px; height: 14px; }
.i16 { width: 16px; height: 16px; }
.i18 { width: 18px; height: 18px; }
.i20 { width: 20px; height: 20px; }
.caret { flex: none; width: 0; height: 0; border: 4px solid transparent; border-top: 5px solid #4e5153; border-bottom: 0; }
.caret.pale { border-top-color: #b0b5b5; }
.sep { flex: none; width: 1px; background: #d5d8d9; }

.app { display: grid; grid-template-rows: auto auto auto 1fr auto; height: 100vh; background: #fafbfc; }

/* Title bar */
.titlebar { display: grid; grid-template-columns: 1fr auto 1fr; align-items: center; height: 28px; background: #d9dfdf; }
.quick { display: flex; align-items: center; padding-left: 4px; }
.quick button { width: 26px; height: 26px; }
.quick .drop { width: 14px; }
.quick .shut { width: 32px; }
.brand { width: 61px; padding-left: 4px; font: 500 18px/24px Inter, sans-serif; color: #4a5051; }
.brand sup { font-size: 8px; line-height: 0; vertical-align: 4px; }
.quick .more { margin-left: 3px; flex-direction: column; gap: 1px; }
.more .caret { border-top-color: #3b4041; }
.more::before { content: ""; width: 10px; height: 1px; background: #3b4041; }
.titlebar h1 { font-size: 13px; color: #b3baba; }
.wincontrols { display: flex; justify-content: flex-end; color: #abb1b1; }
.wincontrols button { width: 27px; height: 26px; }
.dash { width: 10px; height: 1px; margin-top: 6px; background: #abb1b1; }

/* Tabs */
.tabs { display: flex; height: 32px; border-top: 1px solid #7d8684; background: #3f4745; font-size: 14px; color: #f1f4f3; }
.tabs > button { padding: 0 23px; }
.tabs .file { width: 60px; padding: 0 4px 0 0; background: linear-gradient(100deg, #37a52c, #52bb3c); }
.tabs .current { width: 89px; padding: 0; background: #fbfcfd; color: #5c7f3f; }
.helpers { display: flex; align-items: center; height: 26px; margin-left: auto; }
.helpers button { width: 24px; height: 24px; }
.helpers .narrow { width: 22px; }
.helpers .caret { border-top-color: #fff; }
.helpers .help { width: 16px; font-weight: 700; }
.chevron { width: 0; border: 6px solid transparent; border-bottom: 6px solid #fff; border-top: 0; }

/* Ribbon */
.ribbon {
  display: grid;
  grid-template-columns: 156px 155px 148px 233px 157px 173px 382px 148px 95px;
  height: 120px;
  padding-top: 1px;
  border-bottom: 1px solid #c9cccd;
  background: #fafbfd;
}
.group { display: flex; flex-direction: column; border-right: 1px solid #cdd1d4; }
.group.faint { border-color: #e9ebed; }
.cmds { display: grid; height: 90px; }
.operations { grid-template-columns: 66px auto; gap: 7px; padding-left: 1px; }
.single { padding-left: 6px; }
.datum { grid-template-columns: 43px 132px 44px; gap: 3px; padding-left: 4px; }
.shapes { grid-template-columns: 46px auto; gap: 6px; padding-left: 6px; }
.engineering { grid-template-columns: 92px auto; padding-left: 8px; }
.editing { grid-template-columns: 56px 66px 78px 72px auto; }
.surfaces { grid-template-columns: 62px auto; gap: 4px; padding-left: 4px; }
.intent { justify-content: center; }
.col { display: grid; grid-template-rows: repeat(3, 29px); align-content: start; justify-items: start; padding-top: 1px; }
.col button { gap: 4px; }
.col svg { width: 18px; height: 18px; }
.col .caret { margin-left: 4px; }
.big { flex-direction: column; justify-content: flex-start; height: 88px; padding-top: 5px; border: 1px solid transparent; line-height: 17px; }
.editing .big { width: 50px; justify-self: center; }
.big svg { width: 34px; height: 32px; margin-bottom: 12px; }
.big .caret { margin-top: 5px; }
.pressed { background: #dcdedf; border: 1px solid #cbcecf; }
.group button:disabled { color: #b1b4b7; }
.group button:disabled .caret { border-top-color: #adb0b2; }
.title { gap: 5px; height: 29px; padding-top: 1px; }

/* Work area */
.work { position: relative; display: grid; grid-template-columns: 287px 1fr; min-height: 0; }
.navigator { border-right: 1px solid #d3d6d8; background: #fafcfc; font-size: 11px; }
.navtabs { display: flex; height: 26px; background: #dce1e1; }
.navtabs button { width: 30px; }
.navtabs .on { background: #fafcfc; }
.treebar { display: grid; grid-template-columns: 16px 22px 20px 24px 24px 28px 8px 24px 28px 8px 28px 16px 28px; height: 35px; padding: 4px 0 4px 7px; }
.treebar .sep { justify-self: center; }
.treebar .dots { width: 0; margin: 4px 0 4px 4px; border-left: 2px dotted #b5b9bb; }
.treebar .chev { font-size: 16px; padding-bottom: 3px; }
.filter { display: grid; grid-template-columns: 22px 204px 20px 24px; height: 31px; align-items: center; padding-left: 8px; }
.filter .plus { font: 700 20px/20px "Open Sans", sans-serif; color: #808486; }
.field { display: flex; height: 31px; border: 1px solid #bfc3c5; background: #fff; }
.field input { flex: 1; min-width: 0; border: 0; background: none; outline: 0; }
.field button { width: 20px; color: #a9adaf; }
.root { display: flex; align-items: center; gap: 5px; height: 20px; padding-left: 8px; }
.treewrap { padding-top: 5px; }
.tree li { position: relative; display: flex; align-items: center; gap: 3px; height: 20px; margin-left: 16px; padding-left: 13px; border-left: 1px solid #dde0e1; }
.tree li::before { content: ""; position: absolute; left: 0; top: 10px; width: 11px; height: 1px; background: #dde0e1; }
.tree .parent::before { left: -3px; top: 6px; width: 0; height: 0; border: 4px solid transparent; border-left: 5px solid #54585a; border-right: 0; background: none; }
.tree li:last-child { border-color: transparent; }
.tree .i8 { align-self: flex-start; margin: 3px -3px 0 1px; }
.tree span { padding: 0 1px; }
.tree .sel span { background: #b5e0f6; color: #3f5866; }
.insert { height: 3px; margin: 7px 6px 7px 7px; background: #9bcb7a; border: solid #6ea24c; border-width: 0 2px; }

.viewport { display: flex; position: relative; justify-content: center; align-items: flex-start; overflow: hidden; background: #e8eaec; }
.model { position: absolute; width: 100%; height: 100%; }
.axisname { font-size: 11px; fill: #7dde7f; }
.axisname.z { fill: #8ff0e4; }
.csysname { font-size: 12px; fill: #5a4a1c; opacity: .4; }
.viewbar { position: relative; display: flex; margin: 4px 0 0 6px; padding: 3px; border: 1px solid #d0d3d6; background: #fbfcfd; }
.viewbar button { width: 27px; height: 26px; }

/* Dialog */
.dialog {
  position: absolute; top: 0; right: -5px; width: 292px;
  border: 1px solid #a2a5a7; border-radius: 8px; background: #eff1f2;
  box-shadow: -2px 6px 22px rgba(0, 0, 0, .35);
}
.dlghead { display: grid; grid-template-columns: 1fr auto 1fr; align-items: center; height: 33px; padding-top: 4px; border-radius: 8px 8px 0 0; background: #dcdfe0; }
.dlghead h2 { grid-column: 2; font-size: 12px; }
.dlghead button { justify-self: end; width: 22px; height: 20px; margin-right: 4px; color: #55585a; }
.dlgbody { padding: 22px 12px 18px 11px; }
.dlgtabs { display: flex; height: 27px; }
.dlgtabs button { width: 63px; border: 1px solid #dde0e1; border-width: 1px 1px 0 0; color: #8d9092; }
.dlgtabs button:last-child { width: 79px; }
.dlgtabs .on { width: 79px; border-width: 1px; border-bottom: 0; background: #fcfdfd; color: #4e5153; }
.pane { height: 237px; padding: 4px 3px 4px 4px; border: 1px solid #e4e6e7; border-top: 0; background: #fcfdfd; }
.refs { height: 120px; margin-top: 3px; padding: 2px 1px 2px 2px; border: 1px solid #d3d6d3; background: #e8fadc; }
.ref { position: relative; display: grid; grid-template-columns: 176px 1fr; align-items: center; height: 29px; }
.ref > span { align-self: stretch; padding: 6px 0 0 14px; }
.active > span { background: #a9ddf8; color: #3f5866; }
.constraint { display: flex; align-items: center; position: relative; height: 22px; }
.constraint select { width: 100%; height: 22px; padding: 0 0 0 4px; border: 0; border-radius: 0; background: none; appearance: none; outline: 0; }
.constraint > .caret { position: absolute; right: 18px; top: 7px; }
.active .constraint select { background: #a9ddf8; }
.arrowbox { position: absolute; right: 0; display: grid; place-items: center; width: 17px; height: 22px; background: #aeb1b3; }
.arrowbox .caret { border-top-color: #75787a; }
.options { position: absolute; left: 176px; right: 0; top: 26px; background: #eef9e2; }
.options li { height: 20px; padding-left: 5px; line-height: 20px; }
.options .on { background: #a9ddf8; }
.pointer { position: absolute; left: 206px; top: 28px; width: 12px; height: 18px; }
.pane .dim { margin-top: 18px; }
.dim, .translate label { color: #b2b5b7; }
.translate { display: flex; align-items: center; gap: 3px; margin-top: 15px; padding-left: 7px; }
.combo { display: flex; width: 94px; height: 26px; border: 1px solid #b2b5b7; background: #fff; }
.combo input { flex: 1; min-width: 0; border: 0; outline: 0; }
.combo button { width: 17px; border-left: 1px solid #c7cacb; }
.dlgfoot { display: flex; justify-content: flex-end; gap: 8px; padding: 10px 11px 11px; border-top: 1px solid #d3d6d7; }
.dlgfoot button { width: 58px; height: 27px; border: 1px solid #cbcecf; background: #fafbfb; }
.dlgfoot .ok { border-color: #a3dcf9; background: #a3dcf9; }

/* Status bar */
.status { display: flex; height: 27px; padding-left: 2px; border-top: 1px solid #cdd0d2; overflow: hidden; background: #fafbfc; }
.status > button { flex: none; width: 24px; height: 26px; margin: 4px 3px 0 0; }
.status .sep { margin: 4px 4px 0; }
.status > .i14 { margin-top: 9px; }
.message { flex: 1; padding: 8px 0 0 1px; font-size: 11px; }
.status .second { margin: 4px 2px 0 0; }
.find { display: flex; width: 47px; height: 26px; margin-top: 4px; border: 1px solid #d5d8d9; }
.find button { flex: 1; }
.find .narrow { flex: none; width: 16px; border-left: 1px solid #e2e4e5; }
.count { width: 107px; padding: 9px 0 0 5px; }
.scope { position: relative; width: 194px; height: 26px; margin: 4px 13px 0 0; }
.scope select { width: 100%; height: 28px; padding: 0 8px; border: 1px solid #c7cacc; border-radius: 0; background: #fcfdfd; appearance: none; }
.scope .caret { position: absolute; right: 4px; top: 11px; }
.scope::after { content: ""; position: absolute; right: 16px; top: 1px; width: 1px; height: 26px; background: #c7cacc; }
```
